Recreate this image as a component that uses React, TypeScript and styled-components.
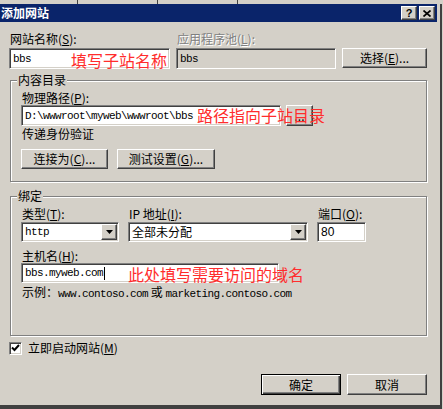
import React from "react";
import styled, { createGlobalStyle, css } from "styled-components";

const GlobalStyle = createGlobalStyle`
  html, body { margin: 0; padding: 0; background: #d4d0c8; }
  body {
    font-family: "Noto Sans CJK SC", "Liberation Sans", sans-serif;
    font-size: 12px;
    line-height: 14px;
    color: #000;
  }
  * { box-sizing: border-box; }
  u { text-decoration-thickness: 1px; text-underline-offset: 1px; }
`;

const Window = styled.div`
  width: 443px;
  height: 409px;
  overflow: hidden;
  background: #d4d0c8;
  display: flex;
  flex-direction: column;
`;

const BehindStrip = styled.div`
  height: 4px;
  flex: none;
  display: flex;
`;

const BehindCell = styled.div<{ $w: number }>`
  width: ${(p) => p.$w}px;
  height: 100%;
  flex: none;
  border-right: 1px solid #404040;
`;

const Dialog = styled.div`
  flex: 1;
  width: 442px;
  display: flex;
  flex-direction: column;
  padding-right: 3px;
  border-right: 2px solid #404040;
  border-bottom: 4px solid #404040;
`;

const TitleBar = styled.div`
  height: 18px;
  flex: none;
  background: #0a246a;
  display: flex;
  align-items: center;
  padding: 0 2px 0 1px;
`;

const TitleText = styled.div`
  color: #fff;
  font-weight: 700;
  font-size: 12px;
  line-height: 14px;
  margin-top: -1px;
  flex: 1;
`;

const CaptionButtons = styled.div`
  display: flex;
  gap: 2px;
`;

const raised = css`
  background: #d4d0c8;
  border: 1px solid;
  border-color: #fff #404040 #404040 #fff;
  box-shadow: inset -1px -1px 0 #808080, inset 1px 1px 0 #d4d0c8;
`;

const sunken = css`
  border: 1px solid;
  border-color: #808080 #fff #fff #808080;
  box-shadow: inset 1px 1px 0 #404040, inset -1px -1px 0 #d4d0c8;
`;

const CaptionButton = styled.div`
  ${raised};
  width: 16px;
  height: 14px;
  display: flex;
  align-items: center;
  justify-content: center;
  font-family: "Liberation Sans", sans-serif;
  font-weight: 700;
  font-size: 11px;
  line-height: 11px;
  color: #000;
`;

const Body = styled.div`
  flex: 1;
  display: flex;
  flex-direction: column;
  padding: 10px 10px 0 9px;
`;

const TopGrid = styled.div`
  display: grid;
  grid-template-columns: 161px 160px 85px;
  column-gap: 6px;
  row-gap: 2px;
  align-items: start;
`;

const Label = styled.div<{ $disabled?: boolean; $mt?: number }>`
  height: 14px;
  line-height: 14px;
  white-space: nowrap;
  padding-left: 1px;
  margin-top: ${(p) => p.$mt ?? 0}px;
  color: ${(p) => (p.$disabled ? "#808080" : "#000")};
  ${(p) => p.$disabled && css`text-shadow: 1px 1px 0 #fff;`}
`;

const TextBox = styled.div<{ $disabled?: boolean; $w?: number; $h?: number }>`
  ${sunken};
  width: ${(p) => (p.$w ? `${p.$w}px` : "100%")};
  height: ${(p) => p.$h ?? 21}px;
  flex: none;
  background: ${(p) => (p.$disabled ? "#d4d0c8" : "#fff")};
  display: flex;
  align-items: center;
  padding: 0 2px 0 3px;
  white-space: nowrap;
`;

const Mono = styled.span`
  font-family: "Liberation Mono", "DejaVu Sans Mono", monospace;
  font-size: 11px;
  letter-spacing: -0.6px;
`;

const SansText = styled.span`
  font-family: "Liberation Sans", sans-serif;
  font-size: 12px;
`;

const Caret = styled.span`
  display: inline-block;
  width: 1px;
  height: 13px;
  background: #000;
  margin-left: 1px;
`;

const noteText = css`
  color: #ff2d2d;
  font-family: "Noto Sans CJK SC", sans-serif;
  font-size: 16px;
  line-height: 16px;
  white-space: nowrap;
`;

const InlineNote = styled.span`
  ${noteText};
  margin-left: auto;
  align-self: flex-end;
`;

const OverlayNote = styled.span<{ $left: number; $top: number }>`
  ${noteText};
  position: absolute;
  left: ${(p) => p.$left}px;
  top: ${(p) => p.$top}px;
`;

const Button = styled.button<{ $w: number; $h?: number; $default?: boolean; $mt?: number }>`
  ${raised};
  width: ${(p) => p.$w}px;
  height: ${(p) => p.$h ?? 20}px;
  margin: ${(p) => p.$mt ?? 0}px 0 0 0;
  padding: 0;
  font: inherit;
  color: #000;
  display: flex;
  align-items: center;
  justify-content: center;
  white-space: nowrap;
  ${(p) =>
    p.$default &&
    css`
      border-color: #000;
      box-shadow: inset 1px 1px 0 #fff, inset -1px -1px 0 #404040, inset -2px -2px 0 #808080;
    `}
`;

const Group = styled.div<{ $mt: number; $pb: number }>`
  position: relative;
  margin: ${(p) => p.$mt}px 0 0 1px;
  width: 417px;
  border: 1px solid #808080;
  box-shadow: 1px 1px 0 #fff, inset 1px 1px 0 #fff;
  padding: 10px 10px ${(p) => p.$pb}px 10px;
  display: flex;
  flex-direction: column;
`;

const Legend = styled.div`
  position: absolute;
  top: -8px;
  left: 6px;
  padding: 0 1px;
  background: #d4d0c8;
  line-height: 14px;
`;

const FieldRow = styled.div<{ $gap?: number }>`
  position: relative;
  display: flex;
  align-items: flex-start;
  gap: ${(p) => p.$gap ?? 0}px;
`;

const ButtonRow = styled.div<{ $mt: number }>`
  display: flex;
  gap: 9px;
  margin-top: ${(p) => p.$mt}px;
`;

const BindGrid = styled.div`
  display: grid;
  grid-template-columns: 98px 180px 49px;
  column-gap: 9px;
  row-gap: 1px;
`;

const Select = styled.div`
  ${sunken};
  height: 20px;
  background: #fff;
  display: flex;
  align-items: center;
  padding: 1px 1px 1px 3px;
  white-space: nowrap;
`;

const DropButton = styled.span`
  ${raised};
  margin-left: auto;
  width: 16px;
  height: 16px;
  flex: none;
  display: flex;
  align-items: center;
  justify-content: center;
`;

const ExampleLine = styled.div`
  height: 14px;
  line-height: 14px;
  white-space: nowrap;
  padding-left: 1px;
  margin-top: 2px;
`;

const CheckRow = styled.div`
  display: flex;
  align-items: center;
  gap: 6px;
  margin-top: 5px;
  height: 14px;
`;

const CheckBox = styled.span`
  ${sunken};
  width: 13px;
  height: 13px;
  background: #fff;
  display: flex;
  align-items: center;
  justify-content: center;
`;

const Footer = styled.div`
  display: flex;
  justify-content: flex-end;
  gap: 6px;
  margin-top: 19px;
`;

const Arrow = () => (
  <svg width="7" height="4" viewBox="0 0 7 4">
    <path d="M0 0H7L3.5 4Z" fill="#000" />
  </svg>
);

export default function App() {
  return (
    <>
      <GlobalStyle />
      <Window>
        <BehindStrip>
          <BehindCell $w={78} />
          <BehindCell $w={80} />
          <BehindCell $w={80} />
        </BehindStrip>
        <Dialog>
          <TitleBar>
            <TitleText>添加网站</TitleText>
            <CaptionButtons>
              <CaptionButton>?</CaptionButton>
              <CaptionButton>
                <svg width="8" height="7" viewBox="0 0 8 7">
                  <path d="M0.5 0.5L7.5 6.5M7.5 0.5L0.5 6.5" stroke="#000" strokeWidth="1.7" />
                </svg>
              </CaptionButton>
            </CaptionButtons>
          </TitleBar>
          <Body>
            <TopGrid>
              <Label>
                网站名称(<u>S</u>):
              </Label>
              <Label $disabled>
                应用程序池(<u>L</u>):
              </Label>
              <span />
              <TextBox>
                <Mono>bbs</Mono>
                <InlineNote>填写子站名称</InlineNote>
              </TextBox>
              <TextBox $disabled>
                <Mono>bbs</Mono>
              </TextBox>
              <Button $w={85} $h={20}>
                选择(<u>E</u>)...
              </Button>
            </TopGrid>

            <Group $mt={11} $pb={12}>
              <Legend>内容目录</Legend>
              <Label>
                物理路径(<u>P</u>):
              </Label>
              <FieldRow $gap={5}>
                <TextBox $w={260}>
                  <Mono>D:\wwwroot\myweb\wwwroot\bbs</Mono>
                </TextBox>
                <Button $w={27} $h={21}>
                  ...
                </Button>
                <OverlayNote $left={176} $top={2}>
                  路径指向子站目录
                </OverlayNote>
              </FieldRow>
              <Label $mt={1}>传递身份验证</Label>
              <ButtonRow $mt={8}>
                <Button $w={87}>
                  连接为(<u>C</u>)...
                </Button>
                <Button $w={98}>
                  测试设置(<u>G</u>)...
                </Button>
              </ButtonRow>
            </Group>

            <Group $mt={14} $pb={36}>
              <Legend>绑定</Legend>
              <BindGrid>
                <Label>
                  类型(<u>T</u>):
                </Label>
                <Label>
                  IP 地址(<u>I</u>):
                </Label>
                <Label>
                  端口(<u>O</u>):
                </Label>
                <Select>
                  <Mono>http</Mono>
                  <DropButton>
                    <Arrow />
                  </DropButton>
                </Select>
                <Select>
                  <span>全部未分配</span>
                  <DropButton>
                    <Arrow />
                  </DropButton>
                </Select>
                <TextBox $h={20}>
                  <SansText>80</SansText>
                </TextBox>
              </BindGrid>
              <Label $mt={7}>
                主机名(<u>H</u>):
              </Label>
              <FieldRow>
                <TextBox $w={258} $h={20}>
                  <Mono>bbs.myweb.com</Mono>
                  <Caret />
                </TextBox>
                <OverlayNote $left={107} $top={3}>
                  此处填写需要访问的域名
                </OverlayNote>
              </FieldRow>
              <ExampleLine>
                示例：<Mono>www.contoso.com</Mono> 或 <Mono>marketing.contoso.com</Mono>
              </ExampleLine>
            </Group>

            <CheckRow>
              <CheckBox>
                <svg width="9" height="8" viewBox="0 0 9 8">
                  <path d="M1 3.5L3.5 6L8 1" stroke="#000" strokeWidth="2" fill="none" />
                </svg>
              </CheckBox>
              <span>
                立即启动网站(<u>M</u>)
              </span>
            </CheckRow>

            <Footer>
              <Button $w={80} $h={21} $default>
                确定
              </Button>
              <Button $w={80} $h={21}>
                取消
              </Button>
            </Footer>
          </Body>
        </Dialog>
      </Window>
    </>
  );
}
